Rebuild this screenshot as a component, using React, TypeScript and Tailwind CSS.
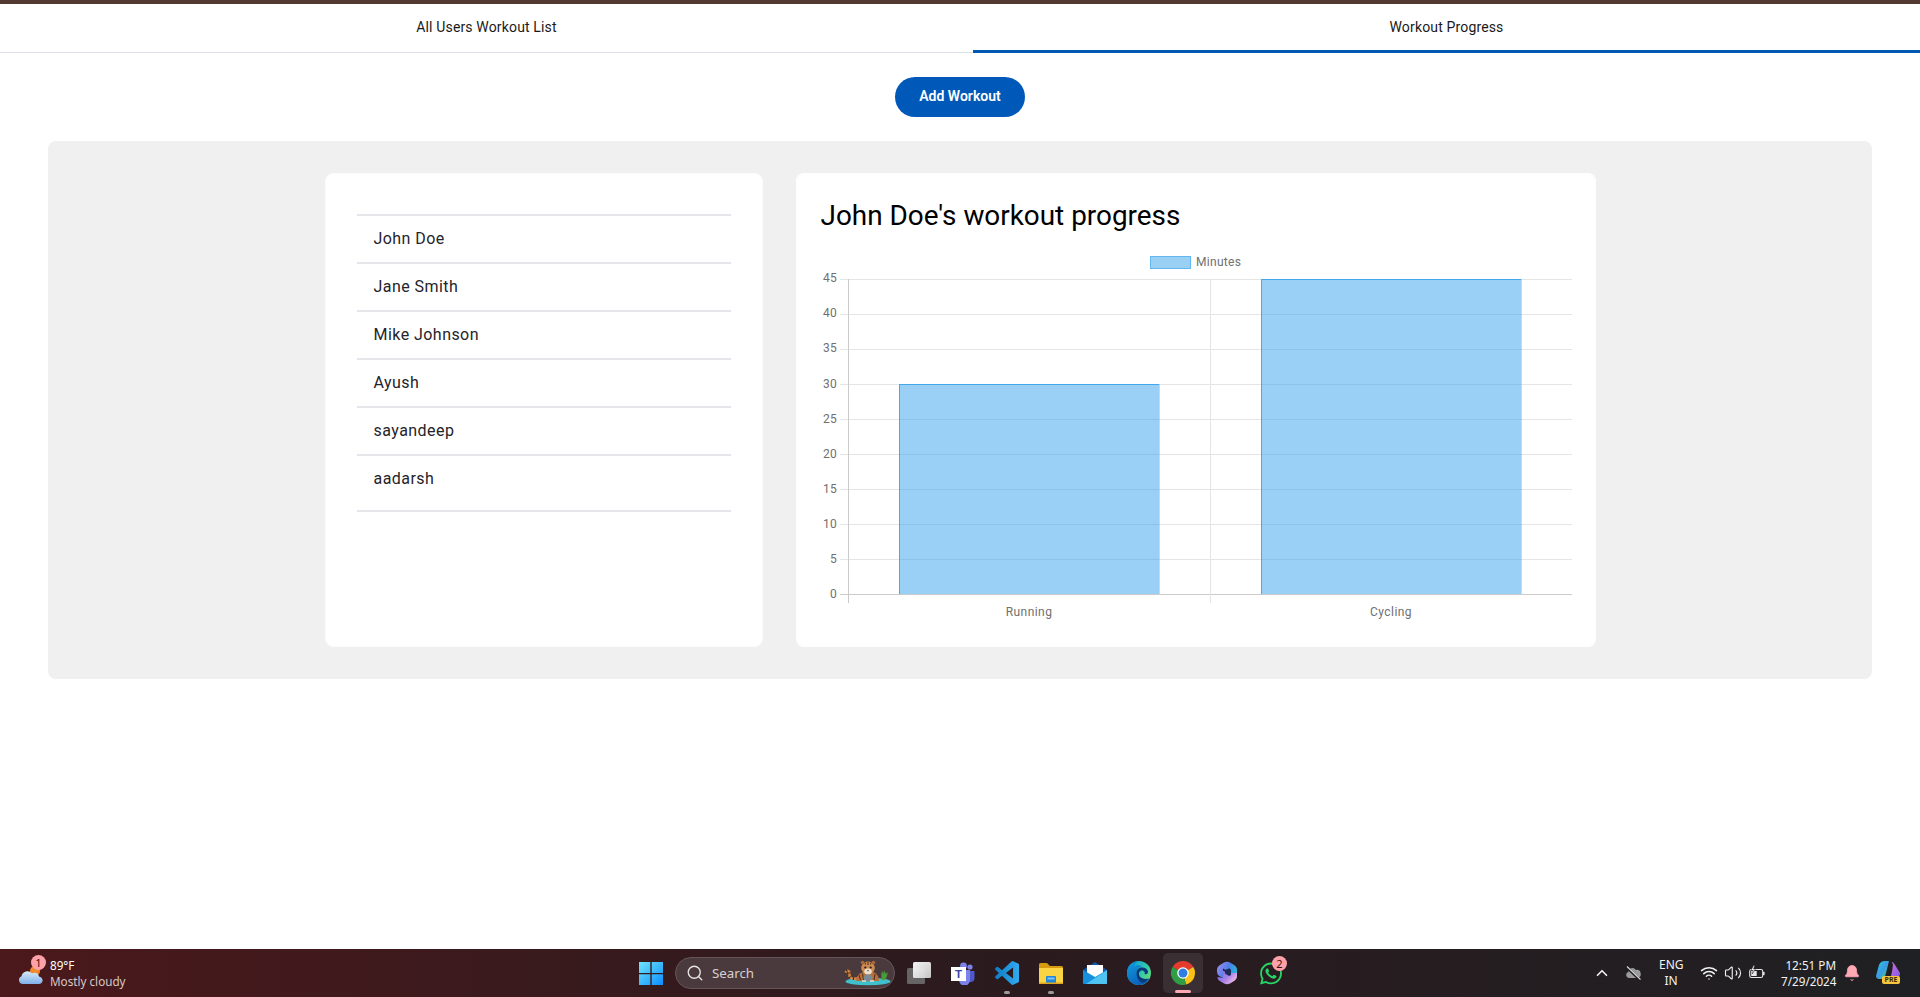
import { ChevronUp, Search, Wifi, Volume2, Bell } from "lucide-react";
import { FaWhatsapp } from "react-icons/fa";

const users = ["John Doe", "Jane Smith", "Mike Johnson", "Ayush", "sayandeep", "aadarsh"];
const ticks = [45, 40, 35, 30, 25, 20, 15, 10, 5, 0];

function Chart() {
  return (
    <svg viewBox="820 250 752 373" className="block w-[752px] h-[373px] font-['Roboto',sans-serif]">
      <rect x="1150.5" y="256.5" width="40" height="12" fill="#9bd0f5" stroke="#36a2eb" strokeOpacity="0.7" />
      <text x="1196" y="266" fontSize="12" fill="#707070" letterSpacing="0.3">Minutes</text>
      {ticks.map((t, i) => {
        const y = 279.5 + i * 35;
        return (
          <g key={t}>
            <line x1="840" x2="1572" y1={y} y2={y} stroke={t === 0 ? "#cbcbcb" : "#e5e5e5"} />
            <text x="837" y={y + (i < 3 ? 2.6 : 3.4)} fontSize="12" fill="#707070" textAnchor="end" letterSpacing="0.2">{t}</text>
          </g>
        );
      })}
      <line x1="848.5" x2="848.5" y1="279" y2="603" stroke="#cbcbcb" />
      <line x1="1210.5" x2="1210.5" y1="279" y2="603" stroke="#e5e5e5" />
      <rect x="899" y="384" width="260" height="210" fill="#36a2eb" fillOpacity="0.5" />
      <rect x="1261" y="279" width="260" height="315" fill="#36a2eb" fillOpacity="0.5" />
      <path d="M899.5 594V384.5H1159" fill="none" stroke="#36a2eb" strokeOpacity="0.85" />
      <path d="M1159.5 384V594" fill="none" stroke="#36a2eb" strokeOpacity="0.35" />
      <path d="M1261.5 594V279.5H1521" fill="none" stroke="#36a2eb" strokeOpacity="0.85" />
      <path d="M1521.5 279V594" fill="none" stroke="#36a2eb" strokeOpacity="0.35" />
      <text x="1029" y="616" fontSize="12" fill="#707070" textAnchor="middle" letterSpacing="0.45">Running</text>
      <text x="1391" y="616" fontSize="12" fill="#707070" textAnchor="middle" letterSpacing="0.45">Cycling</text>
    </svg>
  );
}

function WinLogo() {
  return (
    <svg viewBox="0 0 24 24" className="w-6 h-6">
      <defs>
        <linearGradient id="win" x1="0" y1="0" x2="1" y2="1">
          <stop offset="0" stopColor="#6ee6fb" />
          <stop offset="1" stopColor="#0c8cff" />
        </linearGradient>
      </defs>
      <path d="M0 1h11.3v11H0zM12.7 1H24v11H12.7zM0 13.2h11.3V24H0zM12.7 13.2H24V24H12.7z" fill="url(#win)" />
    </svg>
  );
}

function Tiger() {
  return (
    <svg viewBox="0 0 50 26" className="w-[50px] h-[26px] shrink-0">
      <ellipse cx="24" cy="21.5" rx="22.5" ry="3.8" fill="#3fc0cc" />
      <path d="M38 20c-1-3-1-6 0-9l1.500 3 .5-4 2 4 2-2-1 4-2 4z" fill="#4a9a3a" />
      <path d="M14 18c-5 1.500-9 .5-8.500-3.500S3 9.500 1.500 12.500" fill="none" stroke="#d98440" strokeWidth="2.500" />
      <path d="M14 18c-5 1.500-9 .5-8.500-3.500S3 9.500 1.500 12.500" fill="none" stroke="#3a2418" strokeWidth="2.500" strokeDasharray="1 3" />
      <path d="M12 21c0-5 4-9 9-9h7c4 0 7 4 7 9z" fill="#b9703c" />
      <path d="M15 15l1.500 5M18.500 13.500l1 6.500M31 14l-1 6" stroke="#4a2c18" strokeWidth="1" />
      <ellipse cx="24" cy="8" rx="6.800" ry="6.500" fill="#cc8a50" />
      <circle cx="18.500" cy="2.500" r="1.800" fill="#a8683a" />
      <circle cx="29.500" cy="2.500" r="1.800" fill="#a8683a" />
      <ellipse cx="24" cy="11.500" rx="3.800" ry="3" fill="#ece0cc" />
      <circle cx="21.300" cy="7.500" r="1.100" fill="#1e2030" />
      <circle cx="26.700" cy="7.500" r="1.100" fill="#1e2030" />
      <path d="M23 10h2l-1 1.400z" fill="#5a3028" />
      <path d="M24 2v3M21 2.500l.6 2M27 2.500l-.6 2" stroke="#4a3020" strokeWidth="1" />
      <ellipse cx="24" cy="18" rx="4.500" ry="3.500" fill="#7c8a94" />
      <path d="M18 21h4M26 21h4" stroke="#e8dcc8" strokeWidth="1.600" />
    </svg>
  );
}

function TaskView() {
  return (
    <svg viewBox="0 0 24 22" className="w-6 h-[22px]">
      <defs>
        <linearGradient id="tv" x1="0" y1="0" x2="1" y2="1">
          <stop offset="0" stopColor="#ffffff" />
          <stop offset="1" stopColor="#cfcfcf" />
        </linearGradient>
      </defs>
      <rect x="0" y="6" width="18" height="16" rx="1.5" fill="#666464" />
      <rect x="6" y="0" width="18" height="16" rx="1.5" fill="url(#tv)" fillOpacity="0.95" />
    </svg>
  );
}

function Teams() {
  return (
    <svg viewBox="0 0 24 24" className="w-6 h-6 font-['Liberation_Sans',sans-serif]">
      <circle cx="19" cy="6" r="2.6" fill="#7b83eb" />
      <circle cx="12.5" cy="5" r="3.4" fill="#7b83eb" />
      <path d="M16 10h7.5v7a4 4 0 0 1-4 4H16z" fill="#5059c9" />
      <path d="M8 9h11v10a5 5 0 0 1-11 0z" fill="#7b83eb" />
      <rect x="0" y="6" width="15" height="14" fill="#ffffff" />
      <text x="7.5" y="17" fontSize="11.5" fontWeight="700" fill="#3d44a8" textAnchor="middle">T</text>
    </svg>
  );
}

function VSCode() {
  return (
    <svg viewBox="0 0 24 24" className="w-6 h-6">
      <defs>
        <linearGradient id="vs" x1="0" y1="0" x2="1" y2="0">
          <stop offset="0" stopColor="#0f7cc4" />
          <stop offset="1" stopColor="#32aaf2" />
        </linearGradient>
      </defs>
      <path
        fill="url(#vs)"
        d="M23.15 2.587L18.21.21a1.494 1.494 0 0 0-1.705.29l-9.46 8.63-4.12-3.128a.999.999 0 0 0-1.276.057L.327 7.261A1 1 0 0 0 .326 8.74L3.899 12 .326 15.26a1 1 0 0 0 .001 1.479L1.65 17.94a.999.999 0 0 0 1.276.057l4.12-3.128 9.46 8.63a1.492 1.492 0 0 0 1.704.29l4.942-2.377A1.5 1.5 0 0 0 24 20.06V3.939a1.5 1.5 0 0 0-.85-1.352zm-5.146 14.861L10.826 12l7.178-5.448v10.896z"
      />
    </svg>
  );
}

function Explorer() {
  return (
    <svg viewBox="0 0 24 24" className="w-6 h-6">
      <path d="M0 3.5A1.5 1.5 0 0 1 1.5 2h6.5l3 3h11.5A1.5 1.5 0 0 1 24 6.500V9H0z" fill="#d49a10" />
      <path d="M0 7h24v15a1 1 0 0 1-1 1H1a1 1 0 0 1-1-1z" fill="#fbd443" />
      <rect x="7" y="15" width="10" height="8" rx="1" fill="#1f86d8" />
      <rect x="8.500" y="16.500" width="7" height="2" fill="#7cc4f4" />
      <rect x="0" y="21.500" width="24" height="1.500" fill="#e0a81c" />
    </svg>
  );
}

function Mail() {
  return (
    <svg viewBox="0 0 24 24" className="w-6 h-6">
      <path d="M0 9L12 1l12 8v2H0z" fill="#0c59a8" />
      <path d="M4 4h16v9l-8 4-8-4z" fill="#ffffff" />
      <path d="M0 9l12 7 12-7v13a1 1 0 0 1-1 1H1a1 1 0 0 1-1-1z" fill="#1490df" />
      <path d="M24 9v13a1 1 0 0 1-1 1H3z" fill="#50c4f0" />
    </svg>
  );
}

function Edge() {
  return (
    <svg viewBox="0 0 24 24" className="w-6 h-6">
      <defs>
        <linearGradient id="edgeA" x1="0" y1="0" x2="1" y2="0.8">
          <stop offset="0" stopColor="#0c9ad8" />
          <stop offset="0.55" stopColor="#2cc4b0" />
          <stop offset="1" stopColor="#6adf78" />
        </linearGradient>
        <linearGradient id="edgeB" x1="0" y1="0" x2="0.6" y2="1">
          <stop offset="0" stopColor="#10a0e0" />
          <stop offset="1" stopColor="#0c5cb8" />
        </linearGradient>
      </defs>
      <circle cx="12" cy="12" r="12" fill="url(#edgeA)" />
      <path d="M12 0C5 0 0 5 0 12c0 7 5 12 12 12 4.500 0 8.500-2.500 10.500-6.500-1 .5-2.500 1-4 1-5 0-9-3-9-7.500 0-3 2-5 5-5.500C13.500 4 10 3.500 7 5c2-2.500 3-4 5-5z" fill="url(#edgeB)" />
      <path d="M9.500 11.500c0-3 2.500-5 5.500-5s5.500 1.500 6 4c.3 1.800-1.500 3.200-3.500 2.500 1-1.500-.5-3.500-2.500-3.500-2.500 0-3.500 2.500-2.800 4.800.9 2.700 4.300 4.400 9.300 3.200-1.500 2-3.500 3.700-6 4.300-3.500-.8-6-5-6-10.300z" fill="#0a3a7a" />
    </svg>
  );
}

function Chrome() {
  return (
    <svg viewBox="0 0 24 24" className="w-6 h-6">
      <path d="M12 12L1.600 6A12 12 0 0 1 22.400 6z" fill="#e33b2e" />
      <path d="M12 12L22.400 6A12 12 0 0 1 15 23.600z" fill="#fbc116" />
      <path d="M12 12L15 23.600A12 12 0 0 1 1.600 6z" fill="#2f9e44" />
      <circle cx="12" cy="12" r="5.800" fill="#ffffff" />
      <circle cx="12" cy="12" r="4.500" fill="#2f7de1" />
    </svg>
  );
}

function Copilot() {
  return (
    <svg viewBox="0 0 20 24" className="w-5 h-6">
      <defs>
        <linearGradient id="cpA" x1="0" y1="0" x2="1" y2="0.4">
          <stop offset="0" stopColor="#a78af0" />
          <stop offset="0.6" stopColor="#4f7ee8" />
          <stop offset="1" stopColor="#28b4dc" />
        </linearGradient>
        <linearGradient id="cpB" x1="0" y1="0" x2="1" y2="0.6">
          <stop offset="0" stopColor="#7a5cdc" />
          <stop offset="0.6" stopColor="#a884ea" />
          <stop offset="1" stopColor="#f0b8e0" />
        </linearGradient>
      </defs>
      <path d="M7 1.500c2-1 4-1 6 0l4.500 2.700C19 5.300 20 7 20 9v3h-6.500L6 7.500V17l-3-1.500C1 14.500 0 12.700 0 10.500V9c0-2 1-3.700 2.500-4.800z" fill="url(#cpA)" />
      <path d="M6 9.500l8 4.500v-2h6v3c0 2-1 3.700-2.500 4.800L13 22.500c-2 1-4 1-6 0L2.500 19.800C1 18.700 0.500 17.500 0.500 16L6 17z" fill="url(#cpB)" />
      <path d="M8 9l4.500-1.800L14 9v5l-2 1-4-2.500z" fill="#1f2a5c" />
    </svg>
  );
}

function OneDriveOff() {
  return (
    <svg viewBox="0 0 16 16" className="w-4 h-4">
      <path d="M4 13a3 3 0 0 1-.6-5.900A4 4 0 0 1 10.800 5 3.500 3.500 0 0 1 12.500 13z" fill="#9b9b9b" />
      <path d="M1 1.500L15 15" stroke="#201e20" strokeWidth="2.500" />
      <path d="M2 1.500L15.500 14.500" stroke="#d8d8d8" strokeWidth="1.100" />
    </svg>
  );
}

function BatteryCharge() {
  return (
    <svg viewBox="0 0 16 16" className="w-4 h-4">
      <rect x="0.700" y="4.500" width="13" height="8" rx="1.800" fill="none" stroke="#e8e8e8" strokeWidth="1.100" />
      <rect x="14" y="6.800" width="1.600" height="3.400" rx="0.600" fill="#e8e8e8" />
      <rect x="2.200" y="6" width="5.500" height="5" fill="#e8e8e8" />
      <path d="M4.500 0.500L2 5.500h2.200L3.300 9l3.200-5H4.500L5.800.5z" fill="#ffffff" stroke="#201e20" strokeWidth="0.500" />
    </svg>
  );
}

function CopilotPre() {
  return (
    <div className="relative w-6 h-6 font-['Noto_Sans',sans-serif]">
      <svg viewBox="0 0 24 20" className="w-6 h-5">
        <defs>
          <linearGradient id="cA" x1="0" y1="0" x2="1" y2="1">
            <stop offset="0" stopColor="#2ad0d8" />
            <stop offset="0.5" stopColor="#3a9ae8" />
            <stop offset="1" stopColor="#4ad060" />
          </linearGradient>
          <linearGradient id="cB" x1="0" y1="0" x2="1" y2="1">
            <stop offset="0" stopColor="#e070d8" />
            <stop offset="1" stopColor="#7a58e8" />
          </linearGradient>
        </defs>
        <path d="M3 4C4 1.500 6 0 9 0h4l-3 12c-.5 3-2 6-5 6H3c-2 0-3-2-3-3z" fill="url(#cA)" />
        <path d="M15 1c2 0 3 1 4 3l5 8c0 3-2 6-5 6h-7c3-1 3-4 4-7l1-7c0-1-1-3-2-3z" fill="url(#cB)" />
      </svg>
      <span className="absolute left-[6px] top-[15px] w-[18px] h-[8px] rounded-[2px] bg-[#f8c63c] text-[#3a2a08] text-[7px] leading-[8px] font-bold text-center">PRE</span>
    </div>
  );
}

function Badge({ n, className }: { n: number; className: string }) {
  return (
    <span className={`absolute rounded-full bg-[#ffa1a8] text-[#3a1010] text-[11px] leading-[15px] w-[15px] h-[15px] text-center ${className}`}>{n}</span>
  );
}

function Dock({ children, dot }: { children: React.ReactNode; dot?: boolean }) {
  return (
    <div className="relative w-6 h-6 flex items-center justify-center shrink-0">
      {children}
      {dot && <span className="absolute left-[9px] top-[30px] w-[6px] h-[3px] rounded-full bg-[#9a9a9a]" />}
    </div>
  );
}

function Weather() {
  return (
    <svg viewBox="0 0 24 24" className="w-6 h-6">
      <defs>
        <linearGradient id="cl" x1="0" y1="0" x2="0" y2="1">
          <stop offset="0" stopColor="#d8eafc" />
          <stop offset="1" stopColor="#7fb0ea" />
        </linearGradient>
      </defs>
      <circle cx="16" cy="10" r="5" fill="#f08a2c" />
      <path d="M4 23a4 4 0 0 1-1.500-7.700A6 6 0 0 1 13 12.500a4.500 4.500 0 0 1 7 3c2.500.5 4 2.500 3.500 4.500-.4 2-1.800 3-3.500 3z" fill="url(#cl)" />
    </svg>
  );
}

function Taskbar() {
  return (
    <div className="h-12 shrink-0 flex items-center text-white bg-linear-to-r from-[#4b181b] via-[#2b1a1e] to-[#1f2023] font-['Noto_Sans',sans-serif]">
      <div className="w-[639px] shrink-0 pl-[19px] flex items-center gap-[7px]">
        <div className="relative w-6 h-6">
          <Weather />
          <Badge n={1} className="left-[12px] -top-[6px]" />
        </div>
        <div className="text-[11.7px] leading-4">
          <div>89°F</div>
          <div className="text-[#d6c8c8]">Mostly cloudy</div>
        </div>
      </div>
      <div className="flex items-center gap-5">
        <div className="flex items-center gap-3">
          <WinLogo />
          <div className="w-[220px] h-8 rounded-full bg-[#4a3a3d] border border-[#65555a] flex items-center pl-[10px]">
            <Search size={18} strokeWidth={1.8} className="text-[#e8e4e4]" />
            <span className="ml-[8px] mb-[1px] text-[13.3px] leading-5 text-[#d8d0d0] flex-1">Search</span>
            <Tiger />
          </div>
          <TaskView />
        </div>
        <Dock><Teams /></Dock>
        <Dock dot><VSCode /></Dock>
        <Dock dot><Explorer /></Dock>
        <Dock><Mail /></Dock>
        <Dock><Edge /></Dock>
        <Dock>
          <span className="absolute -left-2 -top-2 w-10 h-10 rounded-[5px] bg-[#3a3034]" />
          <span className="relative"><Chrome /></span>
          <span className="absolute left-[4px] top-[29px] w-4 h-[3px] rounded-full bg-[#ffa9b5]" />
        </Dock>
        <Dock><Copilot /></Dock>
        <Dock>
          <FaWhatsapp size={25} className="text-[#28d366]" />
          <Badge n={2} className="left-[13px] -top-[5px]" />
        </Dock>
      </div>
      <div className="ml-auto flex items-center text-[#f2f2f2]">
        <ChevronUp size={18} strokeWidth={2.2} className="mr-[14px]" />
        <OneDriveOff />
        <div className="ml-[18px] w-6 text-center text-[12px] leading-4">
          <div>ENG</div>
          <div>IN</div>
        </div>
        <div className="ml-[17px] flex items-center">
          <Wifi size={18} />
          <Volume2 size={18} strokeWidth={1.5} className="ml-[6px]" />
          <div className="ml-[7px]"><BatteryCharge /></div>
        </div>
        <div className="ml-[16px] w-[55px] text-right text-[11.7px] leading-4">
          <div>12:51 PM</div>
          <div>7/29/2024</div>
        </div>
        <Bell size={18} fill="#ffa9b5" strokeWidth={1} className="ml-[7px] text-[#ffa9b5]" />
        <div className="ml-[15px] mr-[20px]"><CopilotPre /></div>
      </div>
    </div>
  );
}

export default function App() {
  return (
    <div className="h-[997px] overflow-hidden flex flex-col bg-white font-['Roboto',sans-serif]">
      <div className="h-1 bg-[#533a30] shrink-0" />
      <div className="flex h-[49px] shrink-0 border-b border-[#e0e2ea] text-[14px] font-[450] tracking-[0.15px] text-[#1a1a1a]">
        <div className="w-[973px] flex items-center justify-center pb-[1px]">All Users Workout List</div>
        <div className="flex-1 flex items-center justify-center pb-[1px] relative">
          Workout Progress
          <span className="absolute left-0 right-0 -bottom-px h-[3px] bg-[#0059b2]" />
        </div>
      </div>
      <div className="flex-1 flex flex-col items-center pt-6">
        <button className="w-[130px] h-10 rounded-full bg-[#0059b8] text-white text-[14px] font-semibold pb-[2px]">Add Workout</button>
        <div className="mt-6 w-[1824px] rounded-lg bg-[#f0f0f0] p-8 flex justify-center gap-[33px]">
          <div className="w-[438px] h-[474px] rounded-lg bg-white border border-[#fbfbfb] px-[31px] pt-[40px]">
            {users.map((u, i) => (
              <div
                key={u}
                className={`border-t-2 border-[#e5e5ea] pl-[17px] text-[16px] font-normal tracking-[0.45px] text-[#25232a] flex items-center ${i === 5 ? "h-[58px] border-b-2 pb-[8px]" : "h-12"}`}
              >
                {u}
              </div>
            ))}
          </div>
          <div className="w-[800px] h-[474px] rounded-lg bg-white px-6 pt-[23px]">
            <h2 className="ml-[1px] text-[27.9px] leading-10 text-black">John Doe's workout progress</h2>
            <div className="mt-[14px]"><Chart /></div>
          </div>
        </div>
      </div>
      <Taskbar />
    </div>
  );
}
